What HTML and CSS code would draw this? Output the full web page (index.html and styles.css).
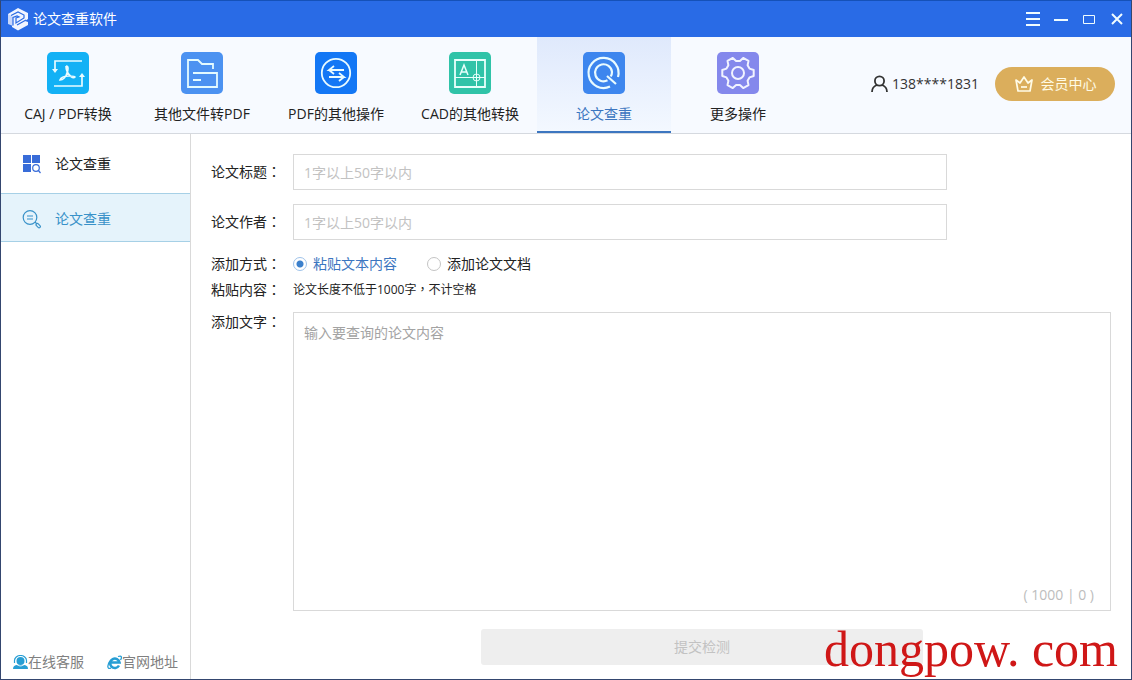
FILE: index.html
```html
<!DOCTYPE html>
<html lang="zh-CN">
<head>
<meta charset="utf-8">
<title>论文查重软件</title>
<link rel="stylesheet" href="styles.css">
</head>
<body>
<div class="window">
  <header class="titlebar">
    <svg class="logo" width="24" height="24" viewBox="0 0 24 24">
      <path d="m12 1 10 5v6l-3 2 3 1v3l-10 5.500L6 20v-3l-4-1V7Z" fill="#f1f5ff"/>
      <path d="M2 7v10l5 2v-9Z" fill="#c9d8fb"/>
      <path d="M5 8.500 12 5l6 3v3l-8 5v-5l3-1-2-1-4 1.500v8M11 18l9-5" fill="none" stroke="#2b6be4" stroke-width="1.200"/>
    </svg>
    <h1 class="title">论文查重软件</h1>
    <div class="controls">
      <button class="control" type="button" aria-label="菜单"><svg width="14" height="14" viewBox="0 0 14 14"><path d="M0 1h14M0 7h14M0 13h14"/></svg></button>
      <button class="control" type="button" aria-label="最小化"><svg width="14" height="14" viewBox="0 0 14 14"><path d="M0 8h14"/></svg></button>
      <button class="control" type="button" aria-label="最大化"><svg width="14" height="14" viewBox="0 0 14 14"><path d="M1.500 3.500h11v8h-11z" class="thin"/></svg></button>
      <button class="control" type="button" aria-label="关闭"><svg width="14" height="14" viewBox="0 0 14 14"><path d="m2 2 10 10M12 2 2 12"/></svg></button>
    </div>
  </header>

  <div class="toolbar">
    <nav class="tabs">
      <button class="tab" type="button">
        <svg class="tab-icon" viewBox="0 0 42 42"><rect width="42" height="42" rx="5" fill="#13b1f5"/><g fill="none" stroke="#e9fbff" stroke-width="1.700"><path d="M35 9H8v9M7 34h28V24"/><path d="M19 14c3 0 2 4 1 7-1 4-4 7-7 7 1-3 5-4 9-4 3 0 6 0 6 1-2 2-7-2-8-6-1-2-1-4-1-5"/></g><path d="m5 17 3 4 3-4ZM32 25l3-4 3 4Z" fill="#e9fbff"/></svg>
        <span>CAJ / PDF转换</span>
      </button>
      <button class="tab" type="button">
        <svg class="tab-icon" viewBox="0 0 42 42"><rect width="42" height="42" rx="5" fill="#4c92f1"/><g fill="none" stroke="#e4fbff" stroke-width="1.800"><path d="M32 17v-5H21l-4-4H7v27h29V21H12M12 28h8"/></g></svg>
        <span>其他文件转PDF</span>
      </button>
      <button class="tab" type="button">
        <svg class="tab-icon" viewBox="0 0 42 42"><rect width="42" height="42" rx="5" fill="#1377f5"/><g fill="none" stroke="#e9fbff" stroke-width="1.800"><circle cx="21" cy="21" r="14.200"/><path d="M29 18H14l5-4M14 18l5 4M14 25h15l-5-4M29 25l-5 4"/></g></svg>
        <span>PDF的其他操作</span>
      </button>
      <button class="tab" type="button">
        <svg class="tab-icon" viewBox="0 0 42 42"><rect width="42" height="42" rx="5" fill="#30c3a8"/><g fill="none" stroke="#e7fffb"><path d="M6 8h30v27H6z" stroke-width="1.800"/><path d="M6 25.500h30M27.500 8v27"/><circle cx="27.500" cy="25.500" r="3.500"/><path d="m11 23 4-10 4 10m-7-3h6" stroke-width="1.500"/></g></svg>
        <span>CAD的其他转换</span>
      </button>
      <button class="tab tab-active" type="button" aria-current="page">
        <svg class="tab-icon" viewBox="0 0 42 42"><rect width="42" height="42" rx="5" fill="#3d86ee"/><g fill="none" stroke="#e9fbff" stroke-width="2.200"><path d="M27 34.500A15 15 0 1 1 35 25"/><path d="M24.500 28.300A8.500 8.500 0 1 1 29 20c0 2-.5 3.300-1.300 4.500M24 24l9 8"/></g></svg>
        <span>论文查重</span>
      </button>
      <button class="tab" type="button">
        <svg class="tab-icon" viewBox="0 0 42 42"><rect width="42" height="42" rx="5" fill="#8488ec"/><g fill="none" stroke="#f1f3ff" stroke-width="2" stroke-linejoin="round"><path d="M36.700 18v6l-4.200 1.400-1.900 3.300.9 4.400-5.300 3-3.300-3h-3.800l-3.300 3-5.300-3 .9-4.400-1.900-3.300L5.300 24v-6l4.200-1.400 1.900-3.300-.9-4.400 5.300-3 3.300 3h3.800l3.300-3 5.300 3-.9 4.400 1.900 3.300Z"/><circle cx="21" cy="21" r="6"/></g></svg>
        <span>更多操作</span>
      </button>
    </nav>
    <div class="account">
      <span class="user">
        <svg width="17" height="18" viewBox="0 0 17 18" fill="none" stroke="#333" stroke-width="1.800"><circle cx="8.500" cy="6" r="4.600"/><path d="M1 17c0-3 2-6 5-7m5 0c3 1 5 4 5 7"/></svg>
        <span>138****1831</span>
      </span>
      <button class="member" type="button">
        <svg width="20" height="18" viewBox="0 0 20 18" fill="none" stroke="#fffbe6" stroke-width="1.700" stroke-linejoin="round"><path d="m2 5 4 3 4-6 4 6 4-3-2 11H4Z"/><path d="M7 12h6"/></svg>
        <span>会员中心</span>
      </button>
    </div>
  </div>

  <div class="body">
    <aside class="sidebar">
      <nav class="menu">
        <a class="menu-item" href="#">
          <svg width="20" height="20" viewBox="0 0 20 20"><path d="M1 1h8v8H1zM10 1h8v8h-8zM1 10h8v8H1z" fill="#386cd8"/><g fill="none" stroke="#386cd8" stroke-width="1.200"><circle cx="14" cy="14" r="3.300"/><path d="m16 16 2.500 3"/></g></svg>
          <span>论文查重</span>
        </a>
        <a class="menu-item menu-active" href="#" aria-current="page">
          <svg width="20" height="20" viewBox="0 0 20 20" fill="none" stroke="#3992c9" stroke-width="1.200"><circle cx="8" cy="8.500" r="6.800"/><path d="M5 7h6M5 10h6M13 13l2 2"/><rect x="14.500" y="14" width="5" height="2.600" rx="1.300" transform="rotate(45 15 15)"/></svg>
          <span>论文查重</span>
        </a>
      </nav>
      <footer class="links">
        <a class="link" href="#">
          <svg width="15" height="15" viewBox="0 0 15 15"><path d="M0 14c0-3 2-4 4-4h7c2 0 4 1 4 4Z" fill="#279ed4"/><circle cx="7.500" cy="6" r="4" fill="#279ed4"/><path d="M1.500 8V5.500a6 5 0 0 1 12 0V8" fill="none" stroke="#279ed4" stroke-width="1.200"/><path d="M3.500 9c2 2.500 6 2.500 8 0" fill="none" stroke="#fff"/></svg>
          <span>在线客服</span>
        </a>
        <a class="link" href="#">
          <svg width="15" height="15" viewBox="0 0 15 15" fill="none" stroke="#279ed4"><path d="M12 10.500A4.700 4.700 0 1 1 12.500 7.500H4" stroke-width="2.600"/><path d="M11 1.500c4-1.500 4 1 2.500 3.500M3 6C0 10 0 15 4 13" stroke-width="1.300"/></svg>
          <span>官网地址</span>
        </a>
      </footer>
    </aside>

    <form class="form">
      <div class="row row-field">
        <label class="label" for="title">论文标题<span class="mark" lang="zh-TW">：</span></label>
        <input class="field" id="title" type="text" placeholder="1字以上50字以内">
      </div>
      <div class="row row-field">
        <label class="label" for="author">论文作者<span class="mark" lang="zh-TW">：</span></label>
        <input class="field" id="author" type="text" placeholder="1字以上50字以内">
      </div>
      <div class="row row-mode" role="radiogroup" aria-labelledby="mode">
        <span class="label" id="mode">添加方式<span class="mark" lang="zh-TW">：</span></span>
        <div class="options">
          <label class="option"><input class="radio" type="radio" name="mode" checked><span>粘贴文本内容</span></label>
          <label class="option"><input class="radio" type="radio" name="mode"><span>添加论文文档</span></label>
        </div>
      </div>
      <div class="row row-hint">
        <span class="label">粘贴内容<span class="mark" lang="zh-TW">：</span></span>
        <span class="hint">论文长度不低于1000字<span class="mark" lang="zh-TW">，</span>不计空格</span>
      </div>
      <div class="row row-text">
        <label class="label" for="text">添加文字<span class="mark" lang="zh-TW">：</span></label>
        <div class="editor">
          <textarea class="textarea" id="text" placeholder="输入要查询的论文内容"></textarea>
          <span class="counter">( 1000 | 0 )</span>
        </div>
      </div>
      <div class="row">
        <span></span>
        <button class="submit" type="submit" disabled>提交检测</button>
      </div>
    </form>
  </div>
  <span class="watermark">dongpow. com</span>
</div>
</body>
</html>
```

FILE: styles.css
```css
* {
  box-sizing: border-box;
}

body {
  margin: 0;
  font: 14px/20px "Open Sans", "Noto Sans CJK SC", sans-serif;
  color: #222;
}

button,
input,
textarea {
  margin: 0;
  font: inherit;
  color: inherit;
}

button {
  padding: 0;
  border: 0;
  background: none;
}

a {
  color: inherit;
  text-decoration: none;
}

svg {
  display: block;
  flex: none;
}

.window {
  position: relative;
  display: flex;
  flex-direction: column;
  min-height: 100vh;
  border: 1px solid #34466f;
  border-top-color: #1551b8;
  background: #fff;
}

.titlebar {
  display: flex;
  align-items: center;
  gap: 3px;
  height: 36px;
  padding: 0 7px 0 5px;
  background: #296be6;
  color: #fff;
}

.title {
  flex: 1;
  margin: 0;
  font-size: 14px;
  font-weight: 400;
}

.controls {
  display: flex;
  gap: 14px;
}

.control svg {
  fill: none;
  stroke: #effcff;
  stroke-width: 2;
}

.control .thin {
  stroke-width: 1;
}

.toolbar {
  display: flex;
  justify-content: space-between;
  height: 97px;
  border-bottom: 1px solid #d5d9df;
  background: #f7faff;
}

.tabs {
  display: flex;
}

.tab {
  display: flex;
  flex-direction: column;
  align-items: center;
  gap: 10px;
  width: 134px;
  padding-top: 15px;
  border-bottom: 2px solid transparent;
  white-space: nowrap;
}

.tab-icon {
  width: 42px;
  height: 42px;
}

.tab-active {
  border-bottom-color: #3c76c0;
  background: linear-gradient(#dfe9fc, #f3f8ff);
  color: #3c76c0;
}

.account {
  display: flex;
  align-items: center;
  gap: 16px;
  padding: 0 16px 2px 0;
}

.user {
  display: flex;
  align-items: center;
  gap: 4px;
  color: #333;
}

.member {
  display: flex;
  align-items: center;
  justify-content: center;
  gap: 7px;
  width: 120px;
  height: 34px;
  border-radius: 17px;
  background: #dbae5c;
  color: #fffbe6;
}

.body {
  display: flex;
  flex: 1;
}

.sidebar {
  display: flex;
  flex-direction: column;
  justify-content: space-between;
  width: 190px;
  border-right: 1px solid #d9d9d9;
}

.menu-item {
  display: flex;
  align-items: center;
  gap: 13px;
  height: 59px;
  padding-left: 21px;
}

.menu-active {
  height: 49px;
  padding-top: 2px;
  border: solid #a6d0e6;
  border-width: 1px 0;
  background: #e5f3fb;
  color: #3992c9;
}

.links {
  display: flex;
  gap: 23px;
  padding: 0 0 7px 12px;
  color: #808080;
}

.link {
  display: flex;
  align-items: center;
}

.form {
  display: flex;
  flex: 1;
  flex-direction: column;
  padding: 20px 20px 14px;
}

.row {
  display: grid;
  grid-template-columns: 82px 1fr;
}

.label {
  height: 20px;
  white-space: nowrap;
}

.mark {
  font-family: "Open Sans", "Noto Sans CJK TC", sans-serif;
}

.row-field {
  align-items: center;
  margin-bottom: 14px;
}

.field {
  width: 80%;
  height: 36px;
  padding: 0 10px;
  border: 1px solid #d9d9d9;
  background: #fff;
}

.field::placeholder {
  color: #c2c2c2;
}

.options {
  display: flex;
  gap: 30px;
}

.option {
  display: flex;
  align-items: center;
  gap: 6px;
}

.option:has(:checked) {
  color: #3c76c0;
}

.radio {
  width: 14px;
  height: 14px;
  border: 1px solid #c4c4c4;
  border-radius: 50%;
  background: #fff;
  appearance: none;
}

.radio:checked {
  border-color: #9fc3ea;
  background: radial-gradient(circle, #3c80cc 3px, #fff 4px);
}

.row-hint {
  margin: 6px 0 12px;
}

.hint {
  font-size: 12px;
}

.row-text {
  flex: 1;
  margin-bottom: 18px;
}

.editor {
  position: relative;
  display: flex;
}

.textarea {
  flex: 1;
  padding: 10px;
  border: 1px solid #d9d9d9;
  resize: none;
}

.textarea::placeholder {
  color: #a3a3a3;
}

.counter {
  position: absolute;
  right: 17px;
  bottom: 6px;
  color: #bdbdbd;
}

.submit {
  justify-self: center;
  width: 54%;
  height: 36px;
  border-radius: 3px;
  background: #eee;
  color: #c2c2c2;
}

.watermark {
  position: absolute;
  right: 13px;
  bottom: 2px;
  font: 50px/56px "Liberation Serif", serif;
  color: #cf1717;
}
```
